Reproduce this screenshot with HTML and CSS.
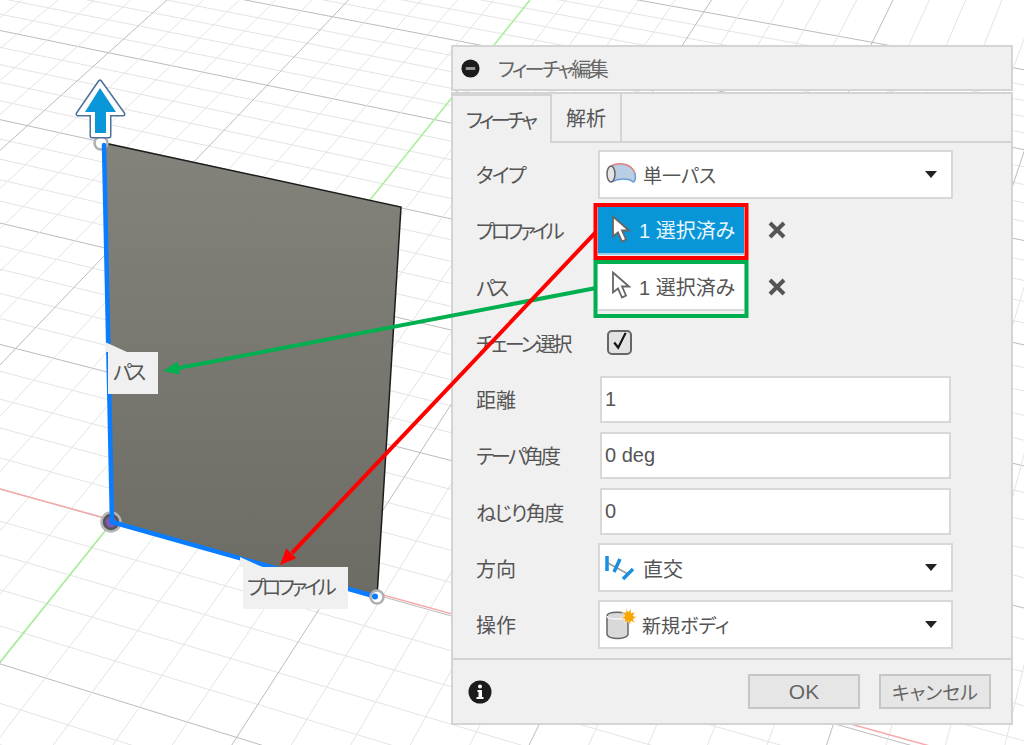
FILE: index.html
```html
<!DOCTYPE html>
<html lang="ja">
  <head>
    <meta charset="utf-8">
    <title>フィーチャ編集</title>
    <link rel="stylesheet" href="styles.css">
  </head>

  <body>
  <div class="stage">

    <!-- 3D view: grid, sketch plate, handles -->
    <svg class="layer" viewBox="0 0 1024 745">
      <defs>
        <linearGradient id="plateFill" x1="0" y1="0" x2="0" y2="1">
          <stop offset="0" stop-color="#83837c"/>
          <stop offset="1" stop-color="#6c6c65"/>
        </linearGradient>
      </defs>
      <g id="grid"></g>
      <line class="axisRed" x1="0" y1="489" x2="1024" y2="772"/>
      <line class="axisGreen" x1="0" y1="662" x2="530" y2="0"/>
      <polygon class="plate" points="104,143 401,207 377,597 112,522"/>
      <polyline class="plateEdge" points="104,143 401,207 377,597"/>
      <circle class="handle" cx="101" cy="143" r="6.5"/>
      <circle class="originHalo" cx="111" cy="522" r="9.5"/>
      <circle class="originDot" cx="111" cy="522" r="5.5"/>
      <polyline class="pathLine" points="104,145 112,522 377,597"/>
      <circle class="handle" cx="377" cy="597" r="6.5"/>
      <circle class="handleDot" cx="375" cy="596.500" r="3"/>
      <polygon class="arrowOuter" points="100,82 78,114 92,114 92,136 109,136 109,114 123,114"/>
      <polygon class="arrowInner" points="100,82 78,114 92,114 92,136 109,136 109,114 123,114"/>
      <polygon class="arrowFill" points="100,88 85,112 95,112 95,133 106,133 106,112 116,112"/>
    </svg>

    <div class="tip tipPath">パス</div>
    <div class="tip tipProfile">プロファイル</div>

    <div class="panel">
      <div class="titleBar">
        <svg class="titleIcon" viewBox="0 0 20 20">
          <circle class="iconBlack" cx="10" cy="10" r="9.500"/>
          <rect class="iconBar" x="5" y="8.500" width="10" height="3"/>
        </svg>
        <span>フィーチャ編集</span>
      </div>

      <div class="tabs">
        <div class="tab tabActive">フィーチャ</div>
        <div class="tab">解析</div>
      </div>

      <div class="form">
        <div class="row">
          <label class="rowLabel tight1">タイプ</label>
          <div class="select">
            <svg class="selectIcon" viewBox="0 1 32 22">
              <path class="pipeBody" d="M6 4C14 0 26 1 30 11C31 17 30 20 28 20C24 16 14 16 6 20Z"/>
              <path class="pipeTop" d="M6 4C14 0 26 1 30 11"/>
              <path class="pipeBottom" d="M6 20C14 16 24 16 28 20C30 20 31 17 30 11"/>
              <ellipse class="pipeEnd" cx="6" cy="12" rx="4" ry="8"/>
            </svg>
            <span class="selectText">単一パス</span>
            <span class="caret"></span>
          </div>
        </div>

        <div class="row">
          <label class="rowLabel tight3">プロファイル</label>
          <div class="picker pickerActive">
            <svg class="cursorIcon" viewBox="0 0 20 28">
              <path d="M2 1L2 21L7 17L11 26L15 24L11 15L18 15Z"/>
            </svg>
            <span>1 選択済み</span>
          </div>
          <svg class="clearIcon" viewBox="0 0 18 18"><path d="M2 2L16 16M16 2L2 16"/></svg>
        </div>

        <div class="row">
          <label class="rowLabel tight3">パス</label>
          <div class="picker">
            <svg class="cursorIcon" viewBox="0 0 20 28">
              <path d="M2 1L2 21L7 17L11 26L15 24L11 15L18 15Z"/>
            </svg>
            <span>1 選択済み</span>
          </div>
          <svg class="clearIcon" viewBox="0 0 18 18"><path d="M2 2L16 16M16 2L2 16"/></svg>
        </div>

        <div class="row">
          <label class="rowLabel tight2">チェーン選択</label>
          <div class="checkbox">
            <svg viewBox="0 0 24 24"><path d="M6 12L10.500 18L19 1"/></svg>
          </div>
        </div>

        <div class="row">
          <label class="rowLabel">距離</label>
          <div class="field">1</div>
        </div>

        <div class="row">
          <label class="rowLabel tight2">テーパ角度</label>
          <div class="field">0 deg</div>
        </div>

        <div class="row">
          <label class="rowLabel tight1">ねじり角度</label>
          <div class="field">0</div>
        </div>

        <div class="row">
          <label class="rowLabel">方向</label>
          <div class="select">
            <svg class="selectIcon" viewBox="0 0 32 26">
              <path class="dirLink" d="M1 7L23 19"/>
              <path class="dirBar" d="M2 1V16M15 4L9 17M28 14L18 24"/>
            </svg>
            <span class="selectText dirText">直交</span>
            <span class="caret"></span>
          </div>
        </div>

        <div class="row">
          <label class="rowLabel">操作</label>
          <div class="select">
            <svg class="selectIcon selectIconTall" viewBox="0 0 32 32">
              <path class="bodySide" d="M2 8C2 3 22 3 23 8V26C23 32 2 32 2 26Z"/>
              <path class="bodyTop" d="M2 8C2 12 23 12 23 8"/>
              <polygon class="burst" points="21,0 23,4 26,1 26,5 30,4 28,8 32,9 28,11 30,15 26,13 25,17 23,13 20,15 20,11 16,10 20,8 17,4 21,5"/>
            </svg>
            <span class="selectText">新規ボディ</span>
            <span class="caret"></span>
          </div>
        </div>
      </div>

      <div class="footer">
        <svg class="infoIcon" viewBox="0 0 24 24">
          <circle class="iconBlack" cx="12" cy="12" r="11.500"/>
          <circle class="iconWhite" cx="12" cy="6.500" r="2"/>
          <path class="iconWhite" d="M9.500 10H14V17H15.500V19H8.500V17H10.500V12H9.500Z"/>
        </svg>
        <button class="button">OK</button>
        <button class="button buttonCancel">キャンセル</button>
      </div>
    </div>

    <!-- annotations drawn over the screenshot -->
    <svg class="layer" viewBox="0 0 1024 745">
      <line class="noteGreen" x1="596" y1="288" x2="176" y2="368.500"/>
      <polygon class="fillGreen" points="163,371 179.900,374.400 177.500,361.600"/>
      <line class="noteRed" x1="596" y1="232" x2="292" y2="553"/>
      <polygon class="fillRed" points="280,565 296.400,558.200 286.200,548.600"/>
      <rect class="noteRed" x="595.500" y="205" width="151" height="53"/>
      <rect class="noteGreen" x="595.500" y="262" width="151" height="54"/>
    </svg>
  </div>

  <script src="script.js"></script>
  </body>
</html>
```

FILE: styles.css
```css
body {
  margin: 0;
  background-color: white;
  font-family: "Liberation Sans", "Noto Sans CJK JP", sans-serif;
  font-feature-settings: "palt";
  color: #555555;
}

.stage {
  position: relative;
  width: 1024px;
  height: 745px;
  overflow: hidden;
}

.layer {
  position: absolute;
  left: 0;
  top: 0;
  width: 1024px;
  height: 745px;
}

/* 3D view */
.gridMajor {
  stroke: #bcbcbc;
  stroke-width: 1;
}

.gridMinor {
  stroke: #e4e4e4;
  stroke-width: 1;
}

.axisRed {
  stroke: #f7a9a9;
  stroke-width: 1.5;
}

.axisGreen {
  stroke: #aaf09a;
  stroke-width: 1.5;
}

.plate {
  fill: url(#plateFill);
}

.plateEdge {
  fill: none;
  stroke: #1c1c1c;
  stroke-width: 1.5;
}

.pathLine {
  fill: none;
  stroke: #0a7cff;
  stroke-width: 4.500;
  stroke-linejoin: round;
  stroke-linecap: round;
}

.handle {
  fill: white;
  stroke: #b0b0b0;
  stroke-width: 2.500;
}

.handleDot {
  fill: #0a7cff;
}

.originHalo {
  fill: #555555;
  stroke: #b5b5b5;
  stroke-width: 2.500;
}

.originDot {
  fill: #7a5cb8;
}

.arrowOuter {
  fill: #4d7199;
  stroke: #4d7199;
  stroke-width: 5;
  stroke-linejoin: round;
}

.arrowInner {
  fill: white;
  stroke: white;
  stroke-width: 2;
  stroke-linejoin: round;
}

.arrowFill {
  fill: #0a97d9;
}

/* labels on the model */
.tip {
  position: absolute;
  background-color: #f0f0f0;
  font-size: 20px;
  letter-spacing: -3.500px;
  line-height: 42px;
  height: 42px;
  white-space: nowrap;
}

.tip::before {
  content: "";
  position: absolute;
  left: -3px;
  top: -10px;
  width: 22px;
  height: 10px;
  background-color: #f0f0f0;
  clip-path: polygon(0 0, 100% 100%, 0 100%);
}

.tipPath {
  left: 108px;
  top: 352px;
  width: 45px;
  padding-left: 5px;
}

.tipProfile {
  left: 243px;
  top: 567px;
  width: 101px;
  padding-left: 4px;
}

/* feature dialog */
.panel {
  position: absolute;
  left: 451px;
  top: 45px;
  width: 562px;
  box-sizing: border-box;
}

.titleBar {
  display: flex;
  align-items: center;
  gap: 18px;
  height: 46px;
  box-sizing: border-box;
  padding-left: 8px;
  background-color: #f0f0f0;
  border: 2px solid #d4d4d4;
  font-size: 20px;
  letter-spacing: -2.500px;
  color: #666666;
}

.titleIcon {
  width: 19px;
  height: 19px;
}

.iconBlack {
  fill: #1c1c1c;
}

.iconBar {
  fill: #9a9a9a;
}

.iconWhite {
  fill: white;
}

.tabs {
  display: flex;
  align-items: flex-end;
  height: 51px;
  box-sizing: border-box;
  margin-top: 1px;
  background-color: #f0f0f0;
  border-top: 2px solid #d4d4d4;
  border-right: 2px solid #d4d4d4;
  border-bottom: 2px solid #d4d4d4;
}

.tab {
  height: 47px;
  box-sizing: border-box;
  padding: 3px 14px 0;
  line-height: 44px;
  font-size: 20px;
  white-space: nowrap;
  border-right: 2px solid #d4d4d4;
}

.tabActive {
  width: 101px;
  height: 49px;
  margin-bottom: -2px;
  padding-left: 13px;
  letter-spacing: -3.500px;
  border-top: 2px solid #d4d4d4;
  border-left: 2px solid #d4d4d4;
  background-color: #f0f0f0;
}

.form {
  display: grid;
  grid-auto-rows: 56.250px;
  height: 515px;
  box-sizing: border-box;
  padding-top: 3px;
  background-color: #f0f0f0;
  border-left: 2px solid #d4d4d4;
  border-right: 2px solid #d4d4d4;
}

.row {
  display: flex;
  align-items: center;
}

.rowLabel {
  width: 145px;
  box-sizing: border-box;
  padding: 1px 0 0 23px;
  font-size: 20px;
  white-space: nowrap;
}

.tight1 {
  letter-spacing: -1.500px;
}

.tight2 {
  letter-spacing: -2.900px;
}

.tight3 {
  letter-spacing: -3.700px;
}

.select {
  display: flex;
  align-items: center;
  width: 355px;
  height: 49px;
  box-sizing: border-box;
  padding: 0 14px 0 5px;
  background-color: white;
  border: 2px solid #d8d8d8;
  font-size: 19px;
}

.selectIcon {
  width: 32px;
  height: 26px;
  margin-right: 6px;
}

.selectIconTall {
  height: 32px;
  margin-right: 5px;
}

.selectText {
  flex: 1;
  padding-top: 1px;
}

.dirText {
  font-size: 20px;
}

.caret {
  width: 0;
  height: 0;
  border-left: 6px solid transparent;
  border-right: 6px solid transparent;
  border-top: 7px solid #222222;
}

.pipeBody {
  fill: #b9cde3;
}

.pipeTop {
  fill: none;
  stroke: #d98080;
  stroke-width: 1.5;
}

.pipeBottom {
  fill: none;
  stroke: #6a9bd8;
  stroke-width: 1.5;
}

.pipeEnd {
  fill: #e4e4e4;
  stroke: #666666;
  stroke-width: 1.5;
}

.dirLink {
  fill: none;
  stroke: #9a9a9a;
  stroke-width: 1.5;
}

.dirBar {
  fill: none;
  stroke: #1a8fe0;
  stroke-width: 3.500;
}

.bodySide {
  fill: #d9d9d9;
  stroke: #666666;
  stroke-width: 1.5;
}

.bodyTop {
  fill: none;
  stroke: #f4f4f4;
  stroke-width: 1.5;
}

.burst {
  fill: #f8a500;
  stroke: white;
  stroke-width: 0.5;
}

.picker {
  display: flex;
  align-items: center;
  width: 146px;
  height: 49px;
  box-sizing: border-box;
  padding-left: 13px;
  gap: 8px;
  background-color: white;
  border-bottom: 2px solid #d8d8d8;
  font-size: 20px;
  white-space: nowrap;
}

.picker span {
  padding-top: 1px;
}

.pickerActive {
  background-color: #0896d8;
  border-bottom-color: #9fc9e4;
  color: #e8f6fd;
}

.cursorIcon {
  width: 20px;
  height: 29px;
  flex-shrink: 0;
}

.cursorIcon path {
  fill: white;
  stroke: #666666;
  stroke-width: 1.8;
}

.clearIcon {
  width: 18px;
  height: 18px;
  margin-left: 24px;
}

.clearIcon path {
  fill: none;
  stroke: #555555;
  stroke-width: 4;
}

.checkbox {
  width: 25px;
  height: 25px;
  margin-left: 9px;
  box-sizing: border-box;
  background-color: #e2e2e2;
  border: 2px solid #666666;
  border-radius: 5px;
}

.checkbox svg {
  display: block;
  width: 21px;
  height: 21px;
}

.checkbox path {
  fill: none;
  stroke: #111111;
  stroke-width: 2.500;
}

.field {
  width: 351px;
  height: 47px;
  margin-left: 2px;
  box-sizing: border-box;
  padding-left: 3px;
  line-height: 43px;
  background-color: white;
  border: 2px solid #d8d8d8;
  font-size: 20px;
}

.footer {
  display: flex;
  align-items: center;
  height: 67px;
  box-sizing: border-box;
  padding-left: 15px;
  background-color: #f0f0f0;
  border: 2px solid #d4d4d4;
}

.infoIcon {
  width: 24px;
  height: 24px;
  margin-right: 256px;
}

.button {
  width: 112px;
  height: 35px;
  padding: 0;
  background-color: #e6e6e6;
  border: 2px solid #c6c6c6;
  color: #666666;
  font-family: inherit;
  font-feature-settings: inherit;
  font-size: 21px;
}

.buttonCancel {
  margin-left: 19px;
  font-size: 19px;
}

/* annotations */
.noteRed {
  fill: none;
  stroke: #ff0000;
  stroke-width: 4;
}

.noteGreen {
  fill: none;
  stroke: #00b050;
  stroke-width: 4;
}

.fillRed {
  fill: #ff0000;
}

.fillGreen {
  fill: #00b050;
}
```

FILE: script.js
```js
// perspective grid: both line families run to a vanishing point
const grid = document.getElementById("grid");
const leftVanish = { x: -6000, y: -1200 };
const rightVanish = { x: 1463, y: -1167 };

function addLine(x1, y1, x2, y2, major) {
  const line = document.createElementNS("http://www.w3.org/2000/svg", "line");
  line.setAttribute("x1", x1);
  line.setAttribute("y1", y1);
  line.setAttribute("x2", x2);
  line.setAttribute("y2", y2);
  line.setAttribute("class", major ? "gridMajor" : "gridMinor");
  grid.appendChild(line);
}

// lines falling to the right, given by where they cross x = 0
for (let i = -30; i <= 30; i++) {
  const y0 = 1 / (6.017e-4 + (0.573e-4 * i) / 5) - 1173;
  const slope = (y0 - leftVanish.y) / -leftVanish.x;
  addLine(0, y0, 1024, y0 + slope * 1024, i % 5 === 0);
}

// lines falling to the left, given by where they cross y = 0
for (let j = -20; j <= 50; j++) {
  const x0 = 530 + 36.3 * j;
  const run = (rightVanish.x - x0) / -rightVanish.y;
  addLine(x0, 0, x0 - run * 745, 745, j % 5 === 0);
}
```
